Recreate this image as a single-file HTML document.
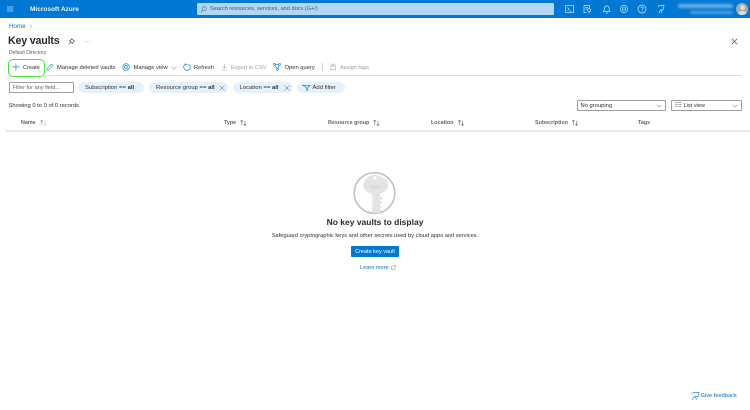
<!DOCTYPE html>
<html><head><meta charset="utf-8"><style>
html,body{margin:0;padding:0;background:#fff}
body{width:750px;height:410px;overflow:hidden;position:relative;font-family:"Liberation Sans",sans-serif;color:#323130}
#r{position:absolute;left:0;top:0;width:750px;height:410px;filter:blur(.3px)}
.t{position:absolute;white-space:nowrap;font-size:5.800px;line-height:8px}
.b{position:absolute;box-sizing:border-box}
.pill{position:absolute;background:#e6f2fb;border-radius:7px;height:11px;top:82px}
.l{color:#0f6cbd}.g{color:#a19f9d}
svg{position:absolute;overflow:visible}
.th{font-weight:bold;color:#666;font-size:5.400px;top:119px}
.tb{top:64px}
.pt{top:84px;font-size:5.900px}
</style></head><body><div id="r">
<div class="b" style="left:0;top:0;width:750px;height:18px;background:#0078d4"></div>
<svg style="left:7px;top:6px" width="7" height="6" fill="none" stroke="#bcdcf4" stroke-width=".8"><path d="M0 1H6.400M0 3H6.400M0 5H6.400"/></svg>
<div class="t" style="left:30px;top:5.500px;color:#fff;font-size:6.500px;font-weight:bold;opacity:.92">Microsoft Azure</div>
<div class="b" style="left:197px;top:3px;width:357px;height:12px;background:#b3d6f2;border-radius:1px"></div>
<svg style="left:200px;top:6px" width="7" height="7" fill="none" stroke="#33658f" stroke-width=".6"><circle cx="4.300" cy="2.600" r="1.900"/><path d="M3 4L.8 6.200"/></svg>
<div class="t" style="left:210px;top:5px;color:#2c5f8a;font-size:5.600px">Search resources, services, and docs (G+/)</div>
<svg style="left:565px;top:4px" width="100" height="11" fill="none" stroke="#cfe6f8" stroke-width=".7">
<rect x=".5" y="1.500" width="8" height="7"/><path d="M2.500 3.500L4 5L2.500 6.500M4.500 7H6.500"/>
<path d="M19 1.500H24.500V4M19 1.500V8.500H21.500M20.500 3.500H23M20.500 5H22"/><circle cx="24" cy="6" r="1.500"/><path d="M24 7.500V9.500"/>
<path d="M38.500 7.500C39.500 6.500 39 3 41 2C43 1.300 44.500 3 44 5C44 6 44.500 7 45 7.500ZM41 8.500C41.300 9.300 42.500 9.300 43 8.500"/>
<circle cx="59" cy="5" r="3.600"/><circle cx="59" cy="5" r="1.400"/>
<circle cx="77" cy="5" r="4"/><path d="M75.700 3.800C75.900 2.500 78.400 2.500 78.300 4C78.200 5 77 5 77 6.200M77 7V7.700"/>
<path d="M94.500 1.500H99L98 6H95.500L94 9M96 6L97 9M93.500 3V1"/>
</svg>
<div class="b" style="left:678px;top:3.500px;width:55px;height:4px;background:#6cb0e6;filter:blur(1.200px);border-radius:3px"></div>
<div class="b" style="left:690px;top:10.500px;width:43px;height:3.500px;background:#55a2de;filter:blur(1.200px);border-radius:3px"></div>
<div class="b" style="left:736px;top:3px;width:12px;height:12px;border-radius:50%;background:#a8a8a8;overflow:hidden"><div class="b" style="left:3.500px;top:2px;width:5px;height:5px;border-radius:50%;background:#ddd"></div><div class="b" style="left:1.500px;top:7.500px;width:9px;height:6px;border-radius:50%;background:#ddd"></div></div>

<div class="t l" style="left:9px;top:22.500px;font-size:6.200px">Home</div>
<svg style="left:29px;top:24px" width="4" height="5" fill="none" stroke="#8a8886" stroke-width=".5"><path d="M.8.500L2.800 2.500L.8 4.500"/></svg>
<div class="t" style="left:8px;top:35px;font-size:10.700px;letter-spacing:-.2px;line-height:13px;font-weight:bold;color:#2b2a29">Key vaults</div>
<svg style="left:68px;top:38px" width="7" height="7" fill="none" stroke="#555" stroke-width=".7"><path d="M3.800.6L6.400 3.200L5.400 3.600L4.400 5.600L1.400 2.600L3.400 1.600ZM2.600 4.400L.6 6.400"/></svg>
<div class="t" style="left:84px;top:38px;font-size:6px;color:#666;letter-spacing:.4px">···</div>
<div class="t" style="left:9px;top:48.500px;font-size:5px;color:#605e5c">Default Directory</div>
<svg style="left:731px;top:38px" width="7" height="7" stroke="#555" stroke-width=".7"><path d="M.8.800L6.200 6.200M6.200.800L.8 6.200"/></svg>

<div class="b" style="left:45px;top:75px;width:697px;height:.7px;background:#e1dfdd"></div>
<div class="b" style="left:8px;top:59px;width:37px;height:17.500px;border:1.200px solid #42e83c;border-radius:5px"></div>
<svg style="left:12px;top:63px" width="8" height="8" stroke="#2a86d5" stroke-width=".7"><path d="M3.900.3V7.500M.3 3.900H7.500"/></svg>
<div class="t tb" style="left:23px;font-size:5.600px">Create</div>
<svg style="left:46px;top:63px" width="8" height="8" fill="none" stroke="#4a9ae0" stroke-width=".7"><path d="M1 7L1 5.500L5 1.500C6 .5 7.500 2 6.500 3L2.500 7Z"/></svg>
<div class="t tb" style="left:57px">Manage deleted vaults</div>
<svg style="left:122px;top:63px" width="8" height="8" fill="none" stroke="#3e90da" stroke-width=".8"><circle cx="4" cy="4" r="3.300"/><circle cx="4" cy="4" r="1.500"/></svg>
<div class="t tb" style="left:133.500px">Manage view</div>
<svg style="left:171px;top:66px" width="6" height="4" fill="none" stroke="#666" stroke-width=".5"><path d="M.5.800L3 3.200L5.500.800"/></svg>
<svg style="left:183px;top:63px" width="8" height="8" fill="none" stroke="#2a86d5" stroke-width=".8"><path d="M5.500 1.200A3.300 3.300 0 1 1 2.500 1.200M2.500 .2V1.600H4"/></svg>
<div class="t tb" style="left:194px;font-size:5.700px">Refresh</div>
<svg style="left:221px;top:63px" width="7" height="8" fill="none" stroke="#aaa" stroke-width=".6"><path d="M3.500.5V5M1.800 3.500L3.500 5.200L5.200 3.500M1 7H6"/></svg>
<div class="t g tb" style="left:231px;font-size:5.600px">Export to CSV</div>
<svg style="left:273px;top:63px" width="8" height="8" fill="none" stroke="#2a86d5" stroke-width=".7"><circle cx="1.300" cy="1.300" r="1"/><circle cx="6.500" cy="1.300" r="1"/><circle cx="4.500" cy="6.500" r="1"/><path d="M2.300 1.500L5.500 1.500M2 2.200L4 5.600M6.200 2.300L5 5.600"/></svg>
<div class="t tb" style="left:284.500px">Open query</div>
<div class="b" style="left:322px;top:63px;width:.7px;height:8px;background:#d2d0ce"></div>
<svg style="left:330px;top:63px" width="7" height="8" fill="none" stroke="#aaa" stroke-width=".6"><path d="M1 2.500L3.300.8L5.600 2.500V6.800H1Z"/><circle cx="3.300" cy="3" r=".6"/></svg>
<div class="t g tb" style="left:340px;font-size:5.600px">Assign tags</div>

<div class="b" style="left:8.500px;top:82px;width:65px;height:11px;border:.7px solid #a19f9d;border-radius:1px"></div>
<div class="t" style="left:12.500px;top:83.500px;color:#666;font-size:5.600px">Filter for any field...</div>
<div class="pill" style="left:78px;width:66px"></div>
<div class="t pt" style="left:85px">Subscription == <b>all</b></div>
<div class="pill" style="left:149px;width:79px"></div>
<div class="t pt" style="left:156px">Resource group == <b>all</b></div>
<svg style="left:219px;top:84.500px" width="6" height="6" stroke="#555" stroke-width=".5"><path d="M.5.500L5.500 5.500M5.500.500L.5 5.500"/></svg>
<div class="pill" style="left:233px;width:60px"></div>
<div class="t pt" style="left:239.500px">Location == <b>all</b></div>
<svg style="left:284px;top:84.500px" width="6" height="6" stroke="#555" stroke-width=".5"><path d="M.5.500L5.500 5.500M5.500.500L.5 5.500"/></svg>
<div class="pill" style="left:297px;width:48px"></div>
<svg style="left:302px;top:84px" width="9" height="7" fill="none" stroke="#2a86d5" stroke-width=".7"><path d="M2 1.500H8L5.500 4V6.500L4.500 6V4ZM.3 1.500H2M1.200.5V2.500"/></svg>
<div class="t pt" style="left:312.500px">Add filter</div>

<div class="t" style="left:8.500px;top:102px;font-size:5.800px">Showing 0 to 0 of 0 records.</div>
<div class="b" style="left:576.500px;top:99.500px;width:89px;height:11px;border:.7px solid #a19f9d;border-radius:1px"></div>
<div class="t" style="left:580.500px;top:101.500px;font-size:5.800px">No grouping</div>
<svg style="left:656px;top:103.500px" width="6" height="4" fill="none" stroke="#555" stroke-width=".5"><path d="M.5.800L3 3.200L5.500.800"/></svg>
<div class="b" style="left:670.500px;top:99.500px;width:71px;height:11px;border:.7px solid #a19f9d;border-radius:1px"></div>
<svg style="left:674.500px;top:102px" width="7" height="5" stroke="#555" stroke-width=".5"><path d="M0 .5H2.500M3.500 .5H6.500M0 2.500H2.500M3.500 2.500H6.500M0 4.500H2.500M3.500 4.500H6.500"/></svg>
<div class="t" style="left:683.500px;top:101.500px;font-size:5.600px">List view</div>
<svg style="left:732px;top:103.500px" width="6" height="4" fill="none" stroke="#555" stroke-width=".5"><path d="M.5.800L3 3.200L5.500.800"/></svg>

<div class="t th" style="left:21px">Name</div><div class="t th" style="left:224px">Type</div><div class="t th" style="left:328px">Resource group</div><div class="t th" style="left:431px">Location</div><div class="t th" style="left:535px">Subscription</div><div class="t th" style="left:638px">Tags</div>
<svg style="left:0;top:119px" width="750" height="8" fill="none" stroke-width=".6">
<g transform="translate(40,0)"><path d="M1.800 6V1.200M.5 2.500L1.800 1.200L3.100 2.500" stroke="#8a8886"/><path d="M5 1.800V6.600M3.700 5.300L5 6.600L6.300 5.300" stroke="#c8c6c4"/></g>
<g transform="translate(240,0)" stroke="#666"><path d="M1.800 6V1.200M.5 2.500L1.800 1.200L3.100 2.500M5 1.800V6.600M3.700 5.300L5 6.600L6.300 5.300"/></g>
<g transform="translate(373,0)" stroke="#666"><path d="M1.800 6V1.200M.5 2.500L1.800 1.200L3.100 2.500M5 1.800V6.600M3.700 5.300L5 6.600L6.300 5.300"/></g>
<g transform="translate(457.500,0)" stroke="#666"><path d="M1.800 6V1.200M.5 2.500L1.800 1.200L3.100 2.500M5 1.800V6.600M3.700 5.300L5 6.600L6.300 5.300"/></g>
<g transform="translate(571.500,0)" stroke="#666"><path d="M1.800 6V1.200M.5 2.500L1.800 1.200L3.100 2.500M5 1.800V6.600M3.700 5.300L5 6.600L6.300 5.300"/></g>
</svg>
<div class="b" style="left:6px;top:130px;width:744px;height:1.500px;background:#e8e7e6"></div>

<svg style="left:353px;top:171px" width="44" height="44">
<circle cx="21.500" cy="22" r="20.300" fill="#fff" stroke="#c4c4c4" stroke-width="1.700"/>
<path d="M21.500 3.500L25 4.500C31 6 35 10 35 14.500C35 18.500 31 21.500 27 22.500V38.500H28.500V40L26 42H20L18.800 40.500V22.500C14 21.500 10 18.500 10 14.500C10 10 14 6 18 4.500Z" fill="#e4e4e4"/>
<path d="M27 26H29.500V28.500H27V30H29V32.500H27V35H28.500V36.500H27Z" fill="#e4e4e4"/>
<circle cx="21.800" cy="7" r="1.700" fill="#fff"/>
<path d="M17 15H27M17 17H27" stroke="#cfcfcf" stroke-width=".7"/><path d="M20 38V24" stroke="#f3f3f3" stroke-width="1"/>
</svg>
<div class="t" style="left:0;width:750px;text-align:center;top:217px;font-size:8.500px;line-height:10px;font-weight:bold;color:#2b2a29">No key vaults to display</div>
<div class="t" style="left:0;width:750px;text-align:center;top:232px;font-size:5.700px">Safeguard cryptographic keys and other secrets used by cloud apps and services.</div>
<div class="b" style="left:351px;top:246px;width:48px;height:11px;background:#0078d4;border-radius:1px"></div>
<div class="t" style="left:351px;width:48px;text-align:center;top:247.500px;color:#fff;font-size:5.500px">Create key vault</div>
<div class="t l" style="left:360px;top:264px;font-size:5.600px">Learn more</div>
<svg style="left:391px;top:265px" width="5" height="5" fill="none" stroke="#777" stroke-width=".4"><path d="M2 1H.5V4.500H4V3M2.500.4H4.600V2.500M4.600.4L2.200 2.800"/></svg>

<svg style="left:691px;top:392px" width="9" height="8" fill="none" stroke="#2a86d5" stroke-width=".7"><path d="M2 .5H8L7 4.500H3.500L1 7.500M4.500 4.500L5.500 7.500M1 2V.5"/></svg>
<div class="t l" style="left:700.500px;top:392px;font-size:5.700px">Give feedback</div>
</div></body></html>
